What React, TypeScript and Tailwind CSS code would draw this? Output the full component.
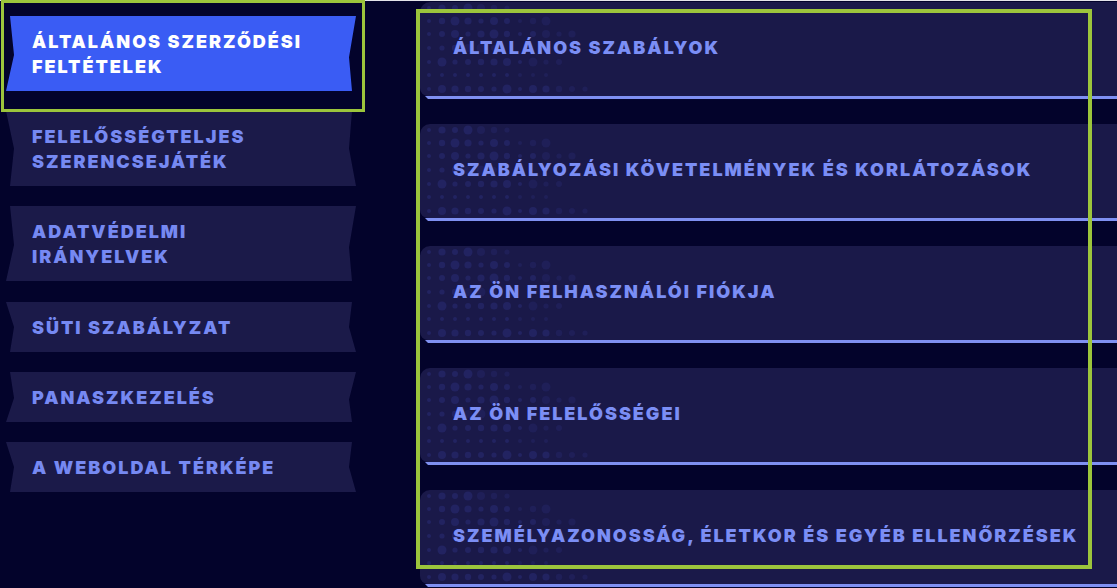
import React from "react";

const FONT = { fontFamily: "Inter, 'DejaVu Sans', sans-serif" };

type NavItem = { lines: string[]; active?: boolean; tall: boolean; mt: string };

const nav: NavItem[] = [
  { lines: ["ÁLTALÁNOS SZERZŐDÉSI", "FELTÉTELEK"], active: true, tall: true, mt: "mt-0" },
  { lines: ["FELELŐSSÉGTELJES", "SZERENCSEJÁTÉK"], tall: true, mt: "mt-[20px]" },
  { lines: ["ADATVÉDELMI", "IRÁNYELVEK"], tall: true, mt: "mt-[20px]" },
  { lines: ["SÜTI SZABÁLYZAT"], tall: false, mt: "mt-[21px]" },
  { lines: ["PANASZKEZELÉS"], tall: false, mt: "mt-[20px]" },
  { lines: ["A WEBOLDAL TÉRKÉPE"], tall: false, mt: "mt-[20px]" },
];

const cards = [
  "ÁLTALÁNOS SZABÁLYOK",
  "SZABÁLYOZÁSI KÖVETELMÉNYEK ÉS KORLÁTOZÁSOK",
  "AZ ÖN FELHASZNÁLÓI FIÓKJA",
  "AZ ÖN FELELŐSSÉGEI",
  "SZEMÉLYAZONOSSÁG, ÉLETKOR ÉS EGYÉB ELLENŐRZÉSEK",
];

function Dots() {
  const rows = [6, 19, 32, 46, 60, 73, 87];
  const limits = [6, 9, 11, 5, 10, 9, 12];
  const circles: React.ReactNode[] = [];
  rows.forEach((y, r) => {
    for (let c = 0; c < 13; c++) {
      if (c > limits[r]) continue;
      const h = (r * 7 + c * 13 + r * c * 3) % 7;
      const rad = [2, 2.6, 3.2, 4, 4.5, 3, 3.6][h];
      const op = c > limits[r] - 3 ? 0.45 : 0.75;
      circles.push(
        <circle key={`${r}-${c}`} cx={9 + c * 13} cy={y} r={rad} fill="#26276a" opacity={op} />
      );
    }
  });
  return (
    <svg className="absolute left-0 top-0" width="180" height="94" viewBox="0 0 180 94">
      {circles}
    </svg>
  );
}

export default function App() {
  return (
    <div className="relative w-[1117px] h-[588px] overflow-hidden bg-[#03032b] flex" style={FONT}>
      <div className="absolute top-0 left-0 right-0 h-px bg-[#e4e4ea]" />
      {/* left nav */}
      <div className="w-[350px] ml-[6px] pt-[16px] flex flex-col shrink-0">
        {nav.map((item, i) => {
          const shapeA = i % 2 === 0;
          return (
            <div
              key={i}
              className={`${item.mt} ${item.tall ? "h-[75px]" : "h-[50px]"} ${
                item.active ? "bg-[#3a5cf4] text-white" : "bg-[#1b1a49] text-[#7689f2]"
              } ${
                shapeA
                  ? "[clip-path:polygon(4px_0,100%_0,calc(100%_-_7px)_55%,calc(100%_-_4px)_100%,0_100%,8px_52%)]"
                  : "[clip-path:polygon(0_0,calc(100%_-_4px)_0,calc(100%_-_7px)_50%,100%_100%,4px_100%,8px_50%)]"
              } flex flex-col justify-center pl-[26px] text-[18px] leading-[25px] font-black tracking-[0.11em]`}
            >
              {item.lines.map((l) => (
                <div key={l}>{l}</div>
              ))}
            </div>
          );
        })}
      </div>

      {/* right content */}
      <div className="ml-[64px] pt-[2px] flex-1 flex flex-col gap-[25px]">
        {cards.map((t) => (
          <div key={t} className="flex flex-col">
            <div className="relative h-[94px] bg-[#1a1949] rounded-tl-[10px] rounded-bl-[8px] overflow-hidden flex items-center pl-[33px] pb-[3px]">
              <Dots />
              <span className="relative text-[#7b8ef5] text-[18px] font-black tracking-[0.11em]">{t}</span>
            </div>
            <div className="h-[3px] ml-[5px] bg-[#7f90f2] [clip-path:polygon(0_0,100%_0,100%_100%,3px_100%)]" />
          </div>
        ))}
      </div>

      {/* highlight outlines */}
      <div className="absolute left-[1px] top-0 w-[364px] h-[112px] border-[3px] border-[#9cc53c]" />
      <div className="absolute left-[416px] top-[9px] w-[676px] h-[560px] border-4 border-[#9cc53c]" />
    </div>
  );
}
